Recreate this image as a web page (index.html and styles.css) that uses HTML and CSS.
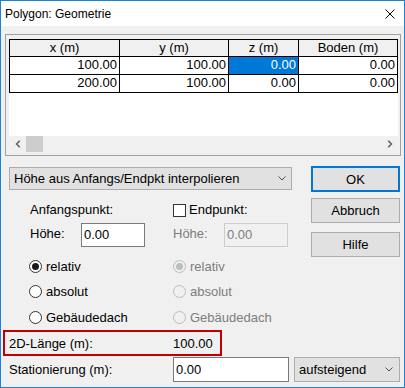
FILE: index.html
```html
<!DOCTYPE html>
<html lang="de">
<head>
<meta charset="utf-8">
<title>Polygon: Geometrie</title>
<link rel="stylesheet" href="styles.css">
</head>
<body>
<div class="window">
  <div class="titlebar">
    <span class="title">Polygon: Geometrie</span>
    <svg class="close" width="10" height="10" viewBox="0 0 10 10"><path d="M0.5 0.5 L9.5 9.5 M9.5 0.5 L0.5 9.5" stroke="#000" stroke-width="1" fill="none"/></svg>
  </div>
  <div class="client">
    <div class="list">
      <div class="list-inner">
        <div class="grid">
          <div class="hd">x (m)</div>
          <div class="hd">y (m)</div>
          <div class="hd">z (m)</div>
          <div class="hd">Boden (m)</div>
          <div class="td">100.00</div>
          <div class="td">100.00</div>
          <div class="td sel">0.00</div>
          <div class="td">0.00</div>
          <div class="td">200.00</div>
          <div class="td">100.00</div>
          <div class="td">0.00</div>
          <div class="td">0.00</div>
        </div>
        <div class="list-space"></div>
        <div class="hscroll">
          <div class="sb-btn"><svg width="6" height="8" viewBox="0 0 6 8"><path d="M4.8 0.8 L1.6 4 L4.8 7.2" stroke="#606060" stroke-width="1.6" fill="none"/></svg></div>
          <div class="sb-thumb"></div>
          <div class="sb-track"></div>
          <div class="sb-btn"><svg width="6" height="8" viewBox="0 0 6 8"><path d="M1.2 0.8 L4.4 4 L1.2 7.2" stroke="#606060" stroke-width="1.6" fill="none"/></svg></div>
        </div>
      </div>
    </div>

    <div class="main">
      <div class="left">
        <div class="combo combo-wide">
          <span class="combo-text">Höhe aus Anfangs/Endpkt interpolieren</span>
          <svg class="chev" width="8" height="5" viewBox="0 0 8 5"><path d="M0.5 0.5 L4 4 L7.5 0.5" stroke="#505050" stroke-width="1" fill="none"/></svg>
        </div>

        <div class="pair pair-head">
          <div class="pcell pad-text"><span>Anfangspunkt:</span></div>
          <div class="pcell"><span class="check"></span><span class="opt-text">Endpunkt:</span></div>
        </div>

        <div class="pair pair-input">
          <div class="pcell pad-text"><span class="lbl-h">Höhe:</span><span class="input">0.00</span></div>
          <div class="pcell disabled"><span class="lbl-h">Höhe:</span><span class="input input-dis">0.00</span></div>
        </div>

        <div class="pair pair-radio first">
          <div class="pcell pad-radio"><span class="radio checked"></span><span class="opt-text">relativ</span></div>
          <div class="pcell disabled"><span class="radio radio-dis checked"></span><span class="opt-text">relativ</span></div>
        </div>
        <div class="pair pair-radio second">
          <div class="pcell pad-radio"><span class="radio"></span><span class="opt-text">absolut</span></div>
          <div class="pcell disabled"><span class="radio radio-dis"></span><span class="opt-text">absolut</span></div>
        </div>
        <div class="pair pair-radio third">
          <div class="pcell pad-radio"><span class="radio"></span><span class="opt-text">Gebäudedach</span></div>
          <div class="pcell disabled"><span class="radio radio-dis"></span><span class="opt-text">Gebäudedach</span></div>
        </div>
      </div>

      <div class="buttons">
        <div class="btn btn-default">OK</div>
        <div class="btn btn-cancel">Abbruch</div>
        <div class="btn btn-help">Hilfe</div>
      </div>
    </div>

    <div class="marked">
      <span>2D-Länge (m):</span>
      <span>100.00</span>
    </div>

    <div class="station">
      <span class="station-lbl">Stationierung (m):</span>
      <span class="input station-input">0.00</span>
      <div class="combo combo-small">
        <span class="combo-text">aufsteigend</span>
        <svg class="chev" width="8" height="5" viewBox="0 0 8 5"><path d="M0.5 0.5 L4 4 L7.5 0.5" stroke="#505050" stroke-width="1" fill="none"/></svg>
      </div>
    </div>
  </div>
</div>
</body>
</html>
```

FILE: styles.css
```css
* { box-sizing: border-box; }
html, body { margin: 0; padding: 0; background: #fff; }
body {
  font-family: "Liberation Sans", Arial, sans-serif;
  font-size: 13px;
  color: #000;
}

.window {
  width: 405px;
  height: 388px;
  border: 1px solid #1883d7;
  background: #f0f0f0;
  display: flex;
  flex-direction: column;
}

.titlebar {
  height: 25px;
  flex: none;
  background: #fff;
  display: flex;
  align-items: flex-start;
}
.title {
  font-size: 12px;
  line-height: 14px;
  margin: 6px 0 0 4px;
}
.close {
  margin: 8px 9px 0 auto;
}

.client {
  flex: 1;
  padding: 8px 3px 0 4px;
  display: flex;
  flex-direction: column;
}

/* list view */
.list {
  flex: none;
  height: 122px;
  border: 1px solid #a0a0a0;
  padding: 4px 2px 3px 3px;
}
.list-inner {
  height: 100%;
  background: #fff;
  display: flex;
  flex-direction: column;
}
.grid {
  display: grid;
  grid-template-columns: 109px 108px 69px 98px;
  gap: 1px;
  padding: 1px;
  background: #000;
  width: 389px;
}
.hd {
  background: #f0f0f0;
  text-align: center;
  line-height: 16px;
}
.td {
  background: #fff;
  text-align: right;
  line-height: 15px;
  padding: 0 2px 2px 0;
}
.td.sel {
  background: #0078d7;
  color: #fff;
}
.list-space { flex: 1; }
.hscroll {
  flex: none;
  height: 16px;
  background: #f0f0f0;
  display: flex;
}
.sb-btn {
  width: 17px;
  display: flex;
  align-items: center;
  justify-content: center;
}
.sb-thumb {
  width: 17px;
  background: #cdcdcd;
}
.sb-track { flex: 1; }

/* main area */
.main {
  display: flex;
  margin-left: 4px;
}
.left {
  width: 283px;
  display: flex;
  flex-direction: column;
}
.combo {
  display: flex;
  align-items: center;
  background: #e1e1e1;
  border: 1px solid #adadad;
}
.combo-text { flex: 1; line-height: 15px; }
.combo-wide {
  margin-top: 11px;
  height: 23px;
  padding: 0 5px 0 4px;
}

.pair {
  display: grid;
  grid-template-columns: 164px 1fr;
}
.pcell {
  display: flex;
  align-items: center;
}
.pad-text { padding-left: 21px; }
.pad-radio { padding-left: 20px; }
.disabled { color: #7d7d7d; }

.pair-head {
  margin-top: 13px;
  height: 14px;
  line-height: 14px;
}
.check {
  width: 13px;
  height: 13px;
  border: 1px solid #333;
  background: #fff;
  margin-right: 3px;
}

.pair-input {
  margin-top: 6px;
  height: 24px;
}
.lbl-h {
  width: 51px;
  line-height: 22px;
  align-self: flex-start;
}
.input {
  display: block;
  width: 64px;
  height: 24px;
  border: 1px solid #7a7a7a;
  background: #fff;
  padding-left: 2px;
  line-height: 22px;
  color: #000;
}
.input-dis {
  border-color: #cccccc;
  background: #f0f0f0;
  color: #7d7d7d;
}

.pair-radio {
  height: 13px;
  line-height: 12px;
}
.pair-radio.first { margin-top: 13px; }
.pair-radio.second { margin-top: 12px; }
.pair-radio.third { margin-top: 13px; }
.radio {
  width: 13px;
  height: 13px;
  border: 1px solid #333;
  border-radius: 50%;
  background: #fff;
  margin-right: 4px;
  display: flex;
  align-items: center;
  justify-content: center;
}
.radio.checked::after {
  content: "";
  width: 7px;
  height: 7px;
  border-radius: 50%;
  background: #1a1a1a;
}
.radio-dis {
  border-color: #bcbcbc;
  background: #f0f0f0;
}
.radio-dis.checked::after { background: #bcbcbc; }

.buttons {
  margin-left: 19px;
  width: 89px;
  display: flex;
  flex-direction: column;
}
.btn {
  display: flex;
  align-items: center;
  justify-content: center;
  background: #e1e1e1;
  border: 1px solid #adadad;
  height: 25px;
  line-height: 15px;
}
.btn-default {
  margin-top: 10px;
  height: 26px;
  border: 2px solid #0078d7;
}
.btn-cancel { margin-top: 6px; }
.btn-help { margin-top: 9px; }

/* annotated row */
.marked {
  margin-top: 6px;
  margin-left: -2px;
  width: 219px;
  height: 26px;
  border: 2px solid #c00000;
  padding-left: 4px;
  display: grid;
  grid-template-columns: 164px 1fr;
  align-items: center;
  line-height: 15px;
}

.station {
  margin-top: 1px;
  margin-left: 4px;
  height: 25px;
  display: flex;
  align-items: center;
}
.station-lbl {
  width: 164px;
  line-height: 15px;
}
.station-input {
  width: 116px;
  height: 25px;
  line-height: 23px;
}
.combo-small {
  margin-left: 5px;
  width: 106px;
  height: 25px;
  padding: 0 6px 0 4px;
}
```
